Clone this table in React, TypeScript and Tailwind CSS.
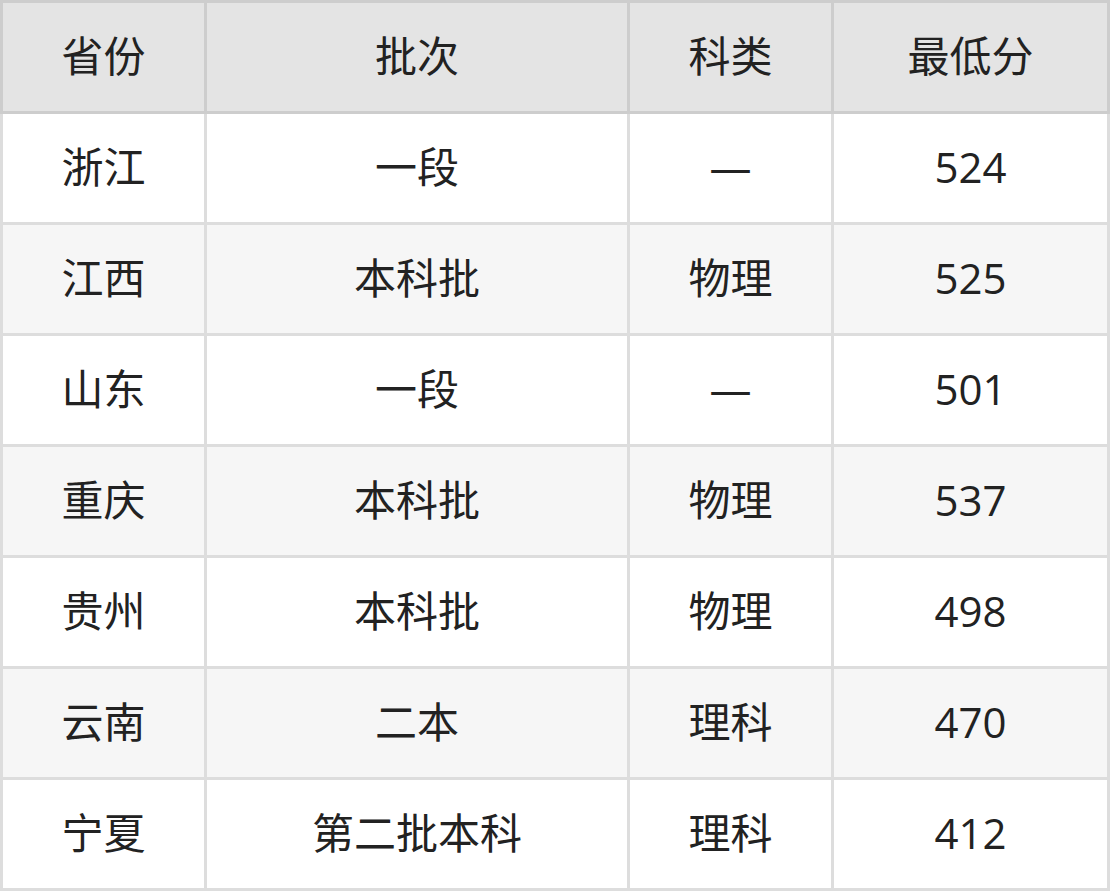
import React from "react";

const header = ["省份", "批次", "科类", "最低分"];
const rows = [
  ["浙江", "一段", "—", "524"],
  ["江西", "本科批", "物理", "525"],
  ["山东", "一段", "—", "501"],
  ["重庆", "本科批", "物理", "537"],
  ["贵州", "本科批", "物理", "498"],
  ["云南", "二本", "理科", "470"],
  ["宁夏", "第二批本科", "理科", "412"],
];

export default function App() {
  return (
    <div
      className="w-[1110px] h-[891px] bg-white text-[#222222] text-[42px]"
      style={{ fontFamily: '"Open Sans", "Noto Sans CJK SC", sans-serif' }}
    >
      <div className="grid grid-cols-[207px_423px_204px_276px]">
        {header.map((h, i) => (
          <div
            key={h}
            className={`h-[114px] pb-[3px] flex items-center justify-center bg-[#e4e4e4] border-t-[3px] border-b-[3px] border-r-[3px] border-[#cdcdcd] ${i === 0 ? "border-l-[3px]" : ""}`}
          >
            {h}
          </div>
        ))}
        {rows.map((r, ri) =>
          r.map((c, ci) => (
            <div
              key={ri + "-" + ci}
              className={`h-[111px] pb-[3px] flex items-center justify-center border-b-[3px] border-r-[3px] border-[#dddddd] ${ri % 2 === 1 ? "bg-[#f6f6f6]" : "bg-white"} ${ci === 0 ? "border-l-[3px]" : ""}`}
            >
              {c}
            </div>
          ))
        )}
      </div>
    </div>
  );
}
